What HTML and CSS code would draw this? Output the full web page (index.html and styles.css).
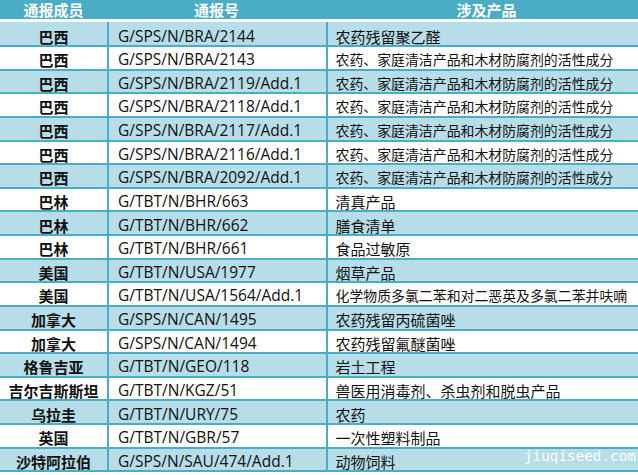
FILE: index.html
```html
<!DOCTYPE html>
<html lang="zh-CN">
<head>
<meta charset="utf-8">
<title>通报</title>
<link rel="stylesheet" href="styles.css">
</head>
<body>
<div class="sheet">
  <div class="head">
    <div class="hc">通报成员</div>
    <div class="hc">通报号</div>
    <div class="hc">涉及产品</div>
  </div>
  <div class="row band first"><div class="c1">巴西</div><div class="c2">G/SPS/N/BRA/2144</div><div class="c3">农药残留聚乙醛</div></div>
  <div class="row"><div class="c1">巴西</div><div class="c2">G/SPS/N/BRA/2143</div><div class="c3 fit">农药、家庭清洁产品和木材防腐剂的活性成分</div></div>
  <div class="row band"><div class="c1">巴西</div><div class="c2">G/SPS/N/BRA/2119/Add.1</div><div class="c3 fit">农药、家庭清洁产品和木材防腐剂的活性成分</div></div>
  <div class="row"><div class="c1">巴西</div><div class="c2">G/SPS/N/BRA/2118/Add.1</div><div class="c3 fit">农药、家庭清洁产品和木材防腐剂的活性成分</div></div>
  <div class="row band"><div class="c1">巴西</div><div class="c2">G/SPS/N/BRA/2117/Add.1</div><div class="c3 fit">农药、家庭清洁产品和木材防腐剂的活性成分</div></div>
  <div class="row"><div class="c1">巴西</div><div class="c2">G/SPS/N/BRA/2116/Add.1</div><div class="c3 fit">农药、家庭清洁产品和木材防腐剂的活性成分</div></div>
  <div class="row band"><div class="c1">巴西</div><div class="c2">G/SPS/N/BRA/2092/Add.1</div><div class="c3 fit">农药、家庭清洁产品和木材防腐剂的活性成分</div></div>
  <div class="row"><div class="c1">巴林</div><div class="c2">G/TBT/N/BHR/663</div><div class="c3">清真产品</div></div>
  <div class="row band"><div class="c1">巴林</div><div class="c2">G/TBT/N/BHR/662</div><div class="c3">膳食清单</div></div>
  <div class="row"><div class="c1">巴林</div><div class="c2">G/TBT/N/BHR/661</div><div class="c3">食品过敏原</div></div>
  <div class="row band"><div class="c1">美国</div><div class="c2">G/TBT/N/USA/1977</div><div class="c3">烟草产品</div></div>
  <div class="row"><div class="c1">美国</div><div class="c2">G/TBT/N/USA/1564/Add.1</div><div class="c3 fit">化学物质多氯二苯和对二恶英及多氯二苯并呋喃</div></div>
  <div class="row band"><div class="c1">加拿大</div><div class="c2">G/SPS/N/CAN/1495</div><div class="c3">农药残留丙硫菌唑</div></div>
  <div class="row"><div class="c1">加拿大</div><div class="c2">G/SPS/N/CAN/1494</div><div class="c3">农药残留氟醚菌唑</div></div>
  <div class="row band"><div class="c1">格鲁吉亚</div><div class="c2">G/TBT/N/GEO/118</div><div class="c3">岩土工程</div></div>
  <div class="row"><div class="c1">吉尔吉斯斯坦</div><div class="c2">G/TBT/N/KGZ/51</div><div class="c3">兽医用消毒剂、杀虫剂和脱虫产品</div></div>
  <div class="row band"><div class="c1">乌拉圭</div><div class="c2">G/TBT/N/URY/75</div><div class="c3">农药</div></div>
  <div class="row"><div class="c1">英国</div><div class="c2">G/TBT/N/GBR/57</div><div class="c3">一次性塑料制品</div></div>
  <div class="row band"><div class="c1">沙特阿拉伯</div><div class="c2">G/SPS/N/SAU/474/Add.1</div><div class="c3">动物饲料</div></div>
  <div class="mark">jiuqiseed.com</div>
</div>
</body>
</html>
```
FILE: styles.css
```css
html, body {
  margin: 0;
  padding: 0;
  background: #ffffff;
  overflow: hidden;
}
.sheet {
  position: relative;
  width: 647px;
  font-family: "Noto Sans CJK SC", sans-serif;
  color: #111111;
}
.head {
  display: grid;
  grid-template-columns: 107px 219px 1fr;
  height: 22px;
  box-sizing: border-box;
  background: #4bacc6;
  border-bottom: 3px solid #ffffff;
}
.hc {
  color: #ffffff;
  font-weight: bold;
  font-size: 15px;
  line-height: 19px;
  text-align: center;
}
.row {
  display: grid;
  grid-template-columns: 107px 219px 1fr;
  height: 23.63px;
  box-sizing: border-box;
  border-bottom: 2px solid #4bacc6;
  background: #ffffff;
}
.row.band {
  background: #b7dde8;
}
.row.first {
  height: 25px;
}
.c1, .c2, .c3 {
  display: flex;
  align-items: flex-end;
  padding-bottom: 1.5px;
  line-height: 15px;
  white-space: nowrap;
  overflow: hidden;
}
.c1 {
  justify-content: center;
  font-weight: bold;
  font-size: 15px;
}
.c2 {
  border-left: 2px solid #4bacc6;
  padding-left: 9px;
  font-family: "Open Sans", "Noto Sans CJK SC", sans-serif;
  font-size: 15.5px;
}
.c3 {
  border-left: 2px solid #4bacc6;
  padding-left: 7.5px;
  font-size: 15px;
}
.c3.fit {
  font-size: 13.9px;
}
.mark {
  position: absolute;
  left: 524px;
  top: 446px;
  font-family: "DejaVu Sans Mono", monospace;
  font-size: 14.3px;
  color: #ffffff;
  line-height: 20px;
}
```
